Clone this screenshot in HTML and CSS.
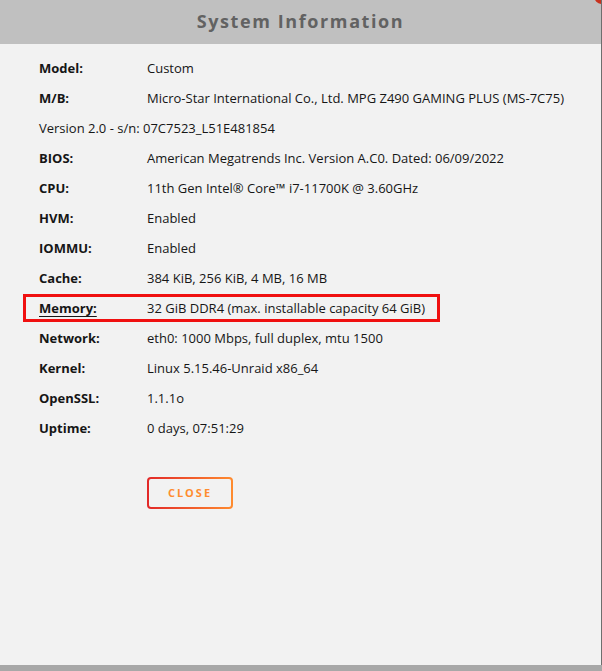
FILE: index.html
```html
<!DOCTYPE html>
<html lang="en">
<head>
    <meta charset="UTF-8" />
    <title>System Information</title>
    <link rel="stylesheet" href="styles.css">
</head>
<body>
    <div class="dialog">
        <span class="close-dot"></span>
        <div class="title-bar">System Information</div>

        <div class="content">
            <div class="row"><span class="label">Model:</span><span class="value">Custom</span></div>
            <div class="row"><span class="label">M/B:</span><span class="value">Micro-Star International Co., Ltd. MPG Z490 GAMING PLUS (MS-7C75)</span></div>
            <div class="row"><span class="plain">Version 2.0 - s/n: 07C7523_L51E481854</span></div>
            <div class="row"><span class="label">BIOS:</span><span class="value">American Megatrends Inc. Version A.C0. Dated: 06/09/2022</span></div>
            <div class="row"><span class="label">CPU:</span><span class="value">11th Gen Intel® Core™ i7-11700K @ 3.60GHz</span></div>
            <div class="row"><span class="label">HVM:</span><span class="value">Enabled</span></div>
            <div class="row"><span class="label">IOMMU:</span><span class="value">Enabled</span></div>
            <div class="row"><span class="label">Cache:</span><span class="value">384 KiB, 256 KiB, 4 MB, 16 MB</span></div>
            <div class="row highlight"><span class="label underline">Memory:</span><span class="value">32 GiB DDR4 (max. installable capacity 64 GiB)</span></div>
            <div class="row"><span class="label">Network:</span><span class="value">eth0: 1000 Mbps, full duplex, mtu 1500</span></div>
            <div class="row"><span class="label">Kernel:</span><span class="value">Linux 5.15.46-Unraid x86_64</span></div>
            <div class="row"><span class="label">OpenSSL:</span><span class="value">1.1.1o</span></div>
            <div class="row"><span class="label">Uptime:</span><span class="value">0 days, 07:51:29</span></div>

            <div class="actions">
                <button class="close-btn"><span>CLOSE</span></button>
            </div>
        </div>
    </div>
</body>
</html>
```

FILE: styles.css
```css
body {
    margin: 0;
    background: #a8a8a8;
    font-family: "Open Sans", "Noto Sans", sans-serif;
    color: #161616;
    overflow: hidden;
}

.dialog {
    position: relative;
    width: 601px;
    height: 665px;
    background: #f2f2f2;
    border-right: 1px solid #6e6e6e;
    box-shadow: 0 1px 0 #777;
    overflow: hidden;
}

.close-dot {
    position: absolute;
    top: -12px;
    right: -9px;
    width: 16px;
    height: 16px;
    border-radius: 50%;
    background: #c8321e;
}

.title-bar {
    height: 44px;
    background: #c0c0c0;
    color: #626262;
    font-size: 18px;
    font-weight: 700;
    letter-spacing: 1.6px;
    text-align: center;
    line-height: 42px;
}

.content {
    padding: 9px 0 0 39px;
    font-size: 13px;
}

.row {
    display: flex;
    align-items: center;
    height: 30px;
}

.label {
    width: 108px;
    font-weight: 700;
}

.underline {
    text-decoration: underline;
    text-underline-offset: 3px;
}

.highlight {
    box-sizing: border-box;
    margin: 1px 0 1px -16px;
    padding-left: 13px;
    width: 417px;
    height: 28px;
    border: 3px solid #f01010;
}

.actions {
    padding: 34px 0 0 108px;
}

.close-btn {
    width: 86px;
    height: 32px;
    padding: 2px;
    border: none;
    border-radius: 4px;
    background: linear-gradient(90deg, #e22828, #ff8c2f);
    cursor: pointer;
}

.close-btn span {
    display: block;
    height: 100%;
    border-radius: 2px;
    background: #f2f2f2;
    color: #ff8c2f;
    font-family: "Open Sans", sans-serif;
    font-size: 11px;
    font-weight: 700;
    letter-spacing: 2px;
    line-height: 28px;
}
```
